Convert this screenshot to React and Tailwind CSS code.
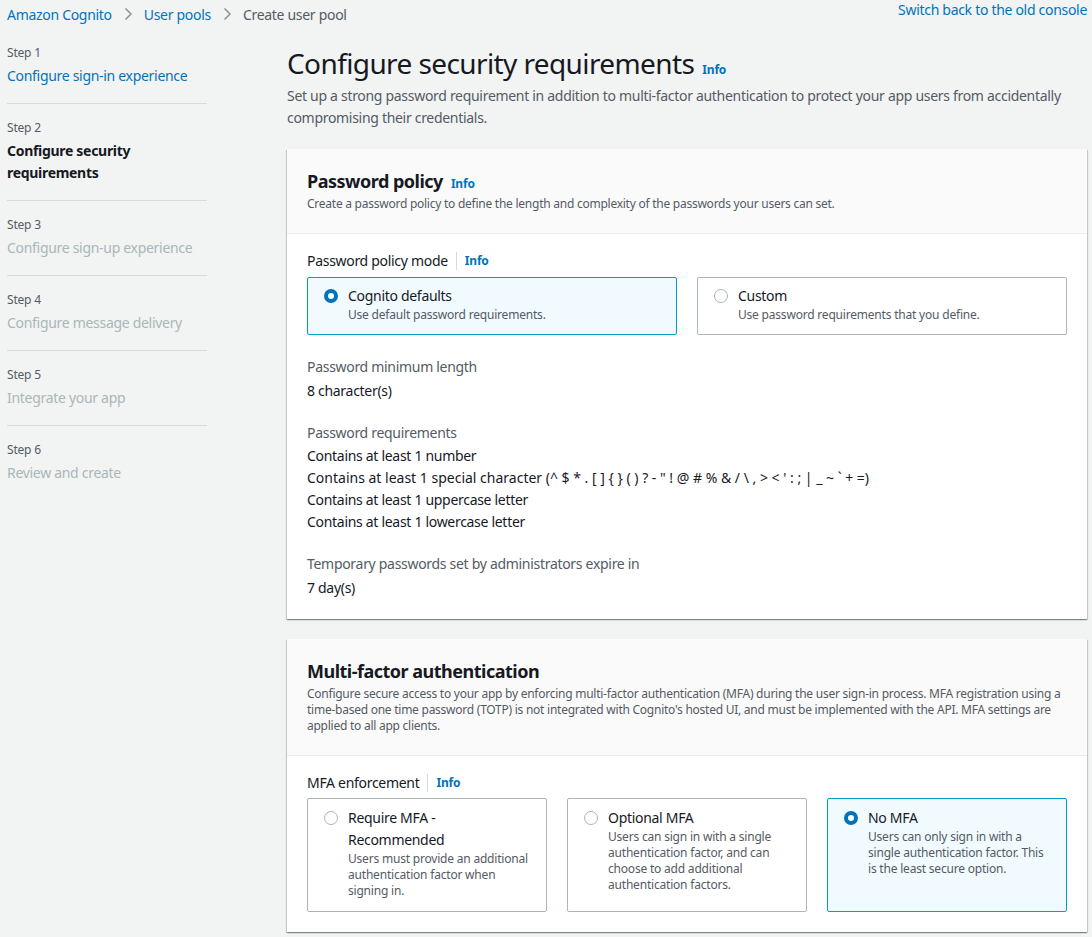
import React from 'react'

const steps = [
  { n: 1, label: 'Configure sign-in experience', state: 'done' },
  { n: 2, label: 'Configure security requirements', state: 'current' },
  { n: 3, label: 'Configure sign-up experience', state: 'todo' },
  { n: 4, label: 'Configure message delivery', state: 'todo' },
  { n: 5, label: 'Integrate your app', state: 'todo' },
  { n: 6, label: 'Review and create', state: 'todo' },
]

const Chevron = () => (
  <svg width="16" height="16" viewBox="0 0 16 16" className="mx-[8px]">
    <path d="M5.5 2.5 L11 8 L5.5 13.5" fill="none" stroke="#879596" strokeWidth="1.5" />
  </svg>
)

const Info = ({ className = '' }) => (
  <span className={'text-[12px] font-bold tracking-[-0.2px] text-[#0073bb] ' + className}>Info</span>
)

const Radio = ({ checked }) =>
  checked ? (
    <span className="mt-[4px] h-[14px] w-[14px] shrink-0 rounded-full border-[4px] border-[#0073bb] bg-white" />
  ) : (
    <span className="mt-[4px] h-[14px] w-[14px] shrink-0 rounded-full border border-[#aab7b8] bg-white" />
  )

const Tile = ({ checked, title, desc, tall }) => (
  <div
    className={
      'flex gap-[10px] rounded-[2px] border pl-[16px] pr-[14px] ' +
      (tall ? 'pt-[8px] pb-[12px] ' : 'pt-[7px] pb-[11px] ') +
      (checked ? 'border-[#00a1c9] bg-[#f1faff]' : 'border-[#aab7b8] bg-white')
    }
  >
    <Radio checked={checked} />
    <div>
      <div className="text-[14px] leading-[22px] text-[#16191f]">{title}</div>
      <div className="text-[12px] leading-[16px] tracking-[-0.2px] text-[#545b64]">{desc}</div>
    </div>
  </div>
)

const Card = ({ title, info, desc, children }) => (
  <div className="bg-white shadow-[0_1px_1px_0_rgba(0,28,36,0.3),1px_1px_1px_0_rgba(0,28,36,0.15),-1px_1px_1px_0_rgba(0,28,36,0.15)]">
    <div className="border-b border-[#eaeded] bg-[#fafafa] px-[20px] pt-[20px] pb-[21px]">
      <div className="flex items-baseline gap-[8px]">
        <h2 className="text-[18px] font-bold leading-[24px] tracking-[-0.5px] text-[#16191f]">{title}</h2>
        {info && <Info />}
      </div>
      <p className="mt-[3px] text-[12px] leading-[16px] tracking-[-0.25px] text-[#545b64]">{desc}</p>
    </div>
    <div className="px-[20px] pt-[16px] pb-[20px]">{children}</div>
  </div>
)

const FieldLabel = ({ children }) => (
  <div className="flex items-center text-[14px] leading-[22px] text-[#16191f]">
    {children}
    <span className="mx-[8px] h-[18px] w-px bg-[#d5dbdb]" />
    <Info />
  </div>
)

const App = () => {
  return (
    <div
      className="min-h-screen bg-[#f2f3f3] tracking-[-0.3px] text-[#16191f]"
      style={{ fontFamily: '"Noto Sans", "Open Sans", Arial, sans-serif' }}
    >
      {/* breadcrumbs */}
      <div className="flex items-start justify-between pl-[7px] pr-[5px]">
        <div className="flex h-[28px] items-center text-[14px] text-[#0073bb]">
          <span>Amazon Cognito</span>
          <Chevron />
          <span>User pools</span>
          <Chevron />
          <span className="text-[#545b64]">Create user pool</span>
        </div>
        <span className="text-[14px] leading-[20px] text-[#0073bb]">Switch back to the old console</span>
      </div>

      <div className="flex">
        {/* wizard steps */}
        <nav className="ml-[7px] w-[200px] shrink-0 pt-[17px]">
          {steps.map((s, i) => (
            <div key={s.n} className={i < steps.length - 1 ? 'mb-[16px] border-b border-[#d5dbdb] pb-[16px]' : ''}>
              <div className="text-[12px] leading-[16px] tracking-[-0.2px] text-[#545b64]">Step {s.n}</div>
              <div
                className={
                  'mt-[4px] text-[14px] leading-[22px] ' +
                  (s.state === 'done'
                    ? 'text-[#0073bb]'
                    : s.state === 'current'
                    ? 'pr-[60px] font-bold text-[#16191f]'
                    : 'text-[#aab7b8]')
                }
              >
                {s.label}
              </div>
            </div>
          ))}
        </nav>

        {/* main */}
        <main className="ml-[80px] mr-[5px] flex-1 pb-[20px]">
          <div className="pt-[17px] pb-[20px]">
            <div className="flex items-baseline gap-[8px]">
              <h1 className="text-[28px] leading-[36px] tracking-[-0.6px] text-[#16191f]">Configure security requirements</h1>
              <Info />
            </div>
            <p className="mt-[4px] text-[14px] leading-[22px] text-[#545b64]">
              Set up a strong password requirement in addition to multi-factor authentication to protect your app users from accidentally compromising their credentials.
            </p>
          </div>

          <Card
            title="Password policy"
            info
            desc="Create a password policy to define the length and complexity of the passwords your users can set."
          >
            <FieldLabel>Password policy mode</FieldLabel>
            <div className="mt-[5px] grid grid-cols-2 gap-[20px]">
              <Tile checked title="Cognito defaults" desc="Use default password requirements." />
              <Tile title="Custom" desc="Use password requirements that you define." />
            </div>

            <div className="mt-[21px] text-[14px] leading-[22px]">
              <div className="text-[#545b64]">Password minimum length</div>
              <div className="mt-[2px]">8 character(s)</div>
            </div>
            <div className="mt-[20px] text-[14px] leading-[22px]">
              <div className="text-[#545b64]">Password requirements</div>
              <div className="mt-[1px]">Contains at least 1 number</div>
              <div className="tracking-normal">
                Contains at least 1 special character (^ $ * . [ ] {'{'} {'}'} ( ) ? - " ! @ # % &amp; / \ , &gt; &lt; ' : ; | _ ~ ` + =)
              </div>
              <div>Contains at least 1 uppercase letter</div>
              <div>Contains at least 1 lowercase letter</div>
            </div>
            <div className="mt-[20px] text-[14px] leading-[22px]">
              <div className="text-[#545b64]">Temporary passwords set by administrators expire in</div>
              <div className="mt-[2px]">7 day(s)</div>
            </div>
          </Card>

          <div className="h-[20px]" />

          <Card
            title="Multi-factor authentication"
            desc="Configure secure access to your app by enforcing multi-factor authentication (MFA) during the user sign-in process. MFA registration using a time-based one time password (TOTP) is not integrated with Cognito's hosted UI, and must be implemented with the API. MFA settings are applied to all app clients."
          >
            <FieldLabel>MFA enforcement</FieldLabel>
            <div className="mt-[4px] grid grid-cols-3 gap-[20px]">
              <Tile
                tall
                title="Require MFA - Recommended"
                desc="Users must provide an additional authentication factor when signing in."
              />
              <Tile
                tall
                title="Optional MFA"
                desc="Users can sign in with a single authentication factor, and can choose to add additional authentication factors."
              />
              <Tile
                tall
                checked
                title="No MFA"
                desc="Users can only sign in with a single authentication factor. This is the least secure option."
              />
            </div>
          </Card>
        </main>
      </div>
    </div>
  )
}

export default App
